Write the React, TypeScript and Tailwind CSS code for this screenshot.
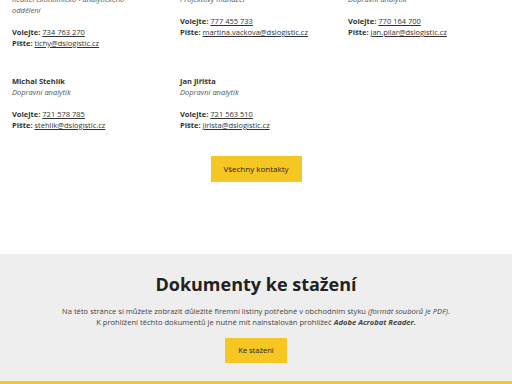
import React from 'react';

interface Contact {
  name: string;
  role: string;
  phone: string;
  email: string;
}

const contacts: Contact[] = [
  { name: 'Pavel Tichý', role: 'Ředitel ekonomicko - analytického\noddělení', phone: '734 763 270', email: 'tichy@dslogistic.cz' },
  { name: 'Martina Vacková', role: 'Projektový manažer', phone: '777 455 733', email: 'martina.vackova@dslogistic.cz' },
  { name: 'Jan Pilař', role: 'Dopravní analytik', phone: '770 164 700', email: 'jan.pilar@dslogistic.cz' },
  { name: 'Michal Stehlík', role: 'Dopravní analytik', phone: '721 578 785', email: 'stehlik@dslogistic.cz' },
  { name: 'Jan Jiřišta', role: 'Dopravní analytik', phone: '721 563 510', email: 'jirista@dslogistic.cz' },
];

const ContactCard: React.FC<{ c: Contact }> = ({ c }) => (
  <div className="text-[7.5px] leading-[11px] text-[#333]">
    <p className="font-bold">{c.name}</p>
    <p className="italic text-[#555] whitespace-pre-line">{c.role}</p>
    <p className="mt-[11px]">
      <span className="font-bold">Volejte: </span>
      <a className="underline">{c.phone}</a>
    </p>
    <p>
      <span className="font-bold">Pište: </span>
      <a className="underline">{c.email}</a>
    </p>
  </div>
);

export default function App() {
  return (
    <div className="w-[512px] h-[384px] overflow-hidden bg-white font-['Open_Sans',sans-serif] text-[#333]">
      {/* Contacts */}
      <section className="-mt-[17px] pl-3">
        <div className="grid grid-cols-[repeat(3,150px)] gap-x-[18px] gap-y-[27px]">
          {contacts.map((c) => (
            <ContactCard key={c.email} c={c} />
          ))}
        </div>
        <div className="flex justify-center pr-3 pt-[25px] pb-[72px]">
          <button className="w-[91px] h-[26px] bg-[#f6c623] text-[8px] font-medium text-[#222]">
            Všechny kontakty
          </button>
        </div>
      </section>

      {/* Documents */}
      <section className="bg-[#eeeeee] pt-[17px] h-[127px] flex flex-col items-center">
        <h2 className="text-[18px] font-bold leading-[26px] text-[#222]">Dokumenty ke stažení</h2>
        <p className="mt-[9px] text-center text-[7.6px] leading-[11px] text-[#444]">
          Na této stránce si můžete zobrazit důležité firemní listiny potřebné v obchodním styku{' '}
          <em>(formát souborů je PDF)</em>.
          <br />
          K prohlížení těchto dokumentů je nutné mít nainstalován prohlížeč{' '}
          <strong className="italic">Adobe Acrobat Reader.</strong>
        </p>
        <button className="mt-[10px] w-[62px] h-[25px] bg-[#f6c623] text-[7.5px] font-medium text-[#222]">
          Ke stažení
        </button>
      </section>
      <div className="h-[4px] bg-[#f6c623]" />
    </div>
  );
}
